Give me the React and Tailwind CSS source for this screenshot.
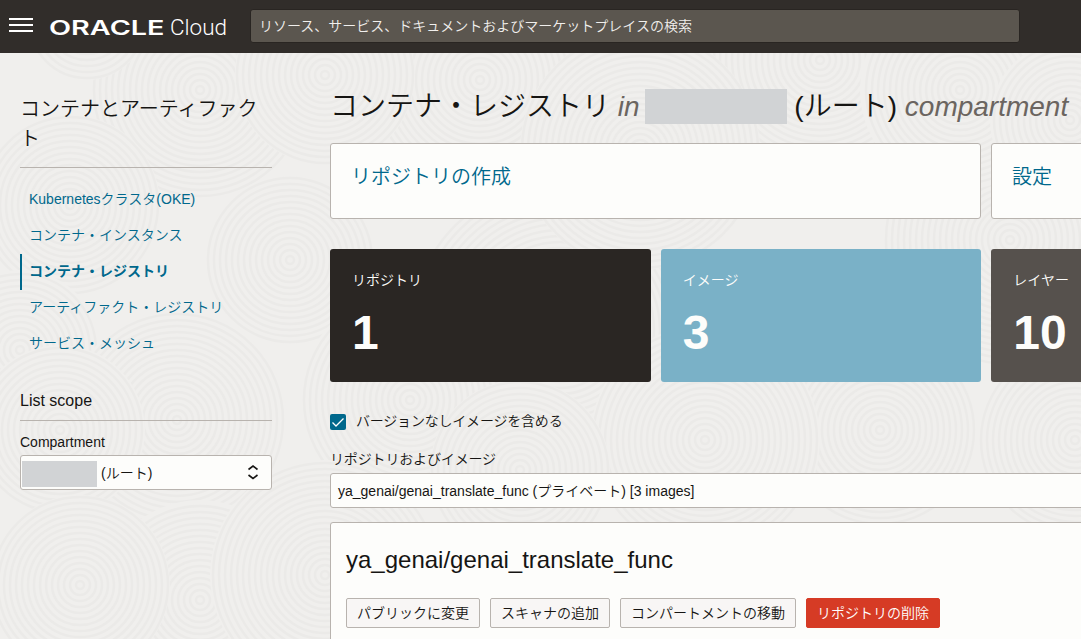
import clsx from "clsx";

const NAV_ITEMS = [
  { label: "Kubernetesクラスタ(OKE)" },
  { label: "コンテナ・インスタンス" },
  { label: "コンテナ・レジストリ", active: true },
  { label: "アーティファクト・レジストリ" },
  { label: "サービス・メッシュ" },
];

const STATS = [
  { label: "リポジトリ", value: 1, color: "bg-[#2a2623]" },
  { label: "イメージ", value: 3, color: "bg-[#7ab1c7]" },
  { label: "レイヤー", value: 10, color: "bg-[#56514d]" },
];

const ACTIONS = ["パブリックに変更", "スキャナの追加", "コンパートメントの移動"];

// Overlapping ring clusters, later ones cover earlier ones
const RINGS = [
  [560, 330, 150],
  [820, 60, 150],
  [1010, 240, 130],
  [480, 80, 110],
  [200, 90, 110],
  [640, 150, 120],
  [960, 90, 100],
  [87, 20, 60],
  [325, 75, 90],
  [1070, 120, 80],
  [290, 260, 85],
  [70, 205, 90],
  [20, 350, 80],
  [410, 400, 110],
  [880, 430, 100],
  [1075, 440, 100],
  [705, 440, 115],
  [177, 420, 110],
  [60, 430, 85],
  [200, 600, 100],
  [80, 585, 90],
  [325, 575, 115],
  [520, 470, 90],
];

function Pattern() {
  return (
    <svg className="absolute inset-0 h-full w-full" viewBox="0 0 1081 639" aria-hidden="true">
      {RINGS.map(([cx, cy, size], i) => (
        <g key={i} fill="none" stroke="#ebeae8" strokeWidth="2.5">
          <circle cx={cx} cy={cy} r={size} fill="#f0efed" stroke="none" />
          {Array.from({ length: Math.floor(size / 6) }, (_, n) => (
            <circle key={n} cx={cx} cy={cy} r={(n + 1) * 6 - 2} />
          ))}
        </g>
      ))}
    </svg>
  );
}

function Header() {
  return (
    <header className="relative flex h-[53px] items-start bg-[#312d2a]">
      <div className="mt-[18px] ml-[9px] flex w-6 flex-col gap-1">
        <span className="h-[2px] bg-white" />
        <span className="h-[2px] bg-white" />
        <span className="h-[2px] bg-white" />
      </div>
      <svg className="mt-[10px] ml-4 h-8 w-[180px]" viewBox="0 0 180 32" fill="#fff">
        <text
          x="0"
          y="24.500"
          fontFamily="Inter, 'Liberation Sans', sans-serif"
          fontSize="20"
          fontWeight="600"
          textLength="115.500"
          lengthAdjust="spacingAndGlyphs"
        >
          ORACLE
        </text>
        <text
          x="121"
          y="25"
          fontFamily="Roboto, sans-serif"
          fontSize="22"
          fontWeight="300"
          textLength="57"
          lengthAdjust="spacingAndGlyphs"
        >
          Cloud
        </text>
      </svg>
      <div className="mt-[9px] ml-[21px] flex h-[34px] w-[770px] items-center rounded-[3px] border border-[#292522] bg-[#5b564f] px-[8px] pb-px text-sm text-[#f1efed]">
        リソース、サービス、ドキュメントおよびマーケットプレイスの検索
      </div>
    </header>
  );
}

function Sidebar() {
  return (
    <aside className="w-[252px] shrink-0 pt-[41px]">
      <h2 className="h-[74px] border-b border-[#b8b3ae] text-xl leading-[30px]">
        コンテナとアーティファクト
      </h2>
      <nav className="mt-[14px]">
        {NAV_ITEMS.map((item) => (
          <a
            key={item.label}
            className={clsx(
              "flex h-9 items-center border-l-2 pb-[2px] pl-[7px] text-sm leading-none text-[#00688c]",
              item.active ? "border-[#00688c] font-bold" : "border-transparent"
            )}
          >
            {item.label}
          </a>
        ))}
      </nav>
      <h3 className="mt-[26px] h-[33px] border-b border-[#b8b3ae] pt-px text-base leading-6">
        List scope
      </h3>
      <p className="mt-[11px] text-sm leading-5">Compartment</p>
      <div className="mt-[3px] flex h-[35px] items-center rounded-[3px] border border-[#b8b3ae] bg-[#fdfdfb] pl-px text-sm">
        <span className="mt-[3px] h-[26px] w-[75px] bg-[#d1d3d5]" />
        <span className="ml-1">(ルート)</span>
        <svg
          className="mr-[12px] mb-[2px] ml-auto"
          width="12"
          height="16"
          viewBox="0 0 12 16"
          fill="none"
          stroke="#161513"
          strokeWidth="1.6"
        >
          <path d="M1.500 5.500 6 2l4.500 3.500M1.500 11 6 14.500l4.500-3.500" />
        </svg>
      </div>
    </aside>
  );
}

function Panel() {
  return (
    <section className="mt-[14px] h-[140px] rounded-[3px] border border-[#b8b3ae] bg-[#fdfdfb] px-[15px] pt-[21px]">
      <h2 className="text-2xl leading-8">ya_genai/genai_translate_func</h2>
      <div className="mt-[22px] flex gap-[10px]">
        {ACTIONS.map((label) => (
          <button
            key={label}
            className="h-[30px] rounded-[2px] border border-[#b8b3ae] bg-[#f8f6f5] px-[10px] text-sm leading-none"
          >
            {label}
          </button>
        ))}
        <button className="h-[30px] rounded-[2px] border border-[#d63b25] bg-[#d63b25] px-[10px] text-sm leading-none text-white">
          リポジトリの削除
        </button>
      </div>
    </section>
  );
}

function Registry() {
  return (
    <main className="w-[982px] shrink-0 pt-[33px]">
      <h1 className="flex h-[41px] items-center text-[28px] leading-10 whitespace-pre">
        <span>コンテナ・レジストリ</span>
        <em className="text-[#6b6560]"> in</em>
        <span className="ml-[5px] h-[35px] w-[142px] bg-[#d1d3d5]" />
        <span> (ルート) </span>
        <em className="text-[#6b6560]">compartment</em>
      </h1>

      <div className="mt-4 grid grid-cols-[651px_1fr] gap-[10px] text-xl text-[#00688c]">
        <a className="h-[76px] rounded-[3px] border border-[#b8b3ae] bg-[#fdfdfb] px-5 pt-[18px] leading-[30px]">
          リポジトリの作成
        </a>
        <a className="h-[76px] rounded-[3px] border border-[#b8b3ae] bg-[#fdfdfb] px-5 pt-[18px] leading-[30px]">
          設定
        </a>
      </div>

      <div className="mt-[30px] grid grid-cols-3 gap-[10px] text-[#fdfdfb]">
        {STATS.map((stat) => (
          <div key={stat.label} className={clsx("h-[133px] rounded-[3px] px-[22px] pt-[21px]", stat.color)}>
            <p className="text-sm leading-5">{stat.label}</p>
            <p className="mt-[15px] text-5xl leading-[56px] font-bold">{stat.value}</p>
          </div>
        ))}
      </div>

      <label className="mt-[29px] flex h-5 items-center text-sm leading-5">
        <span className="mt-[2px] mr-[10px] flex size-4 items-center justify-center rounded-[2px] bg-[#00688c]">
          <svg width="14" height="14" viewBox="0 0 14 14" fill="none" stroke="#fff" strokeWidth="1.3">
            <path d="M1.500 7.500 5 11l7.500-7.500" />
          </svg>
        </span>
        <span className="tracking-[-0.2px]">バージョンなしイメージを含める</span>
      </label>

      <p className="mt-[18px] text-sm leading-5 tracking-[-0.15px]">リポジトリおよびイメージ</p>
      <div className="mt-1 flex h-[35px] items-center rounded-[3px] border border-[#b8b3ae] bg-[#fdfdfb] px-[7px] text-sm">
        ya_genai/genai_translate_func (プライベート) [3 images]
      </div>
      <Panel />
    </main>
  );
}

export default function App() {
  return (
    <div className="relative h-[639px] w-[1081px] overflow-hidden bg-[#f0efed] font-['Liberation_Sans','Noto_Sans_CJK_JP',sans-serif] font-[350] text-[#161513]">
      <Pattern />
      <Header />
      <div className="relative flex gap-[58px] pl-5">
        <Sidebar />
        <Registry />
      </div>
    </div>
  );
}
